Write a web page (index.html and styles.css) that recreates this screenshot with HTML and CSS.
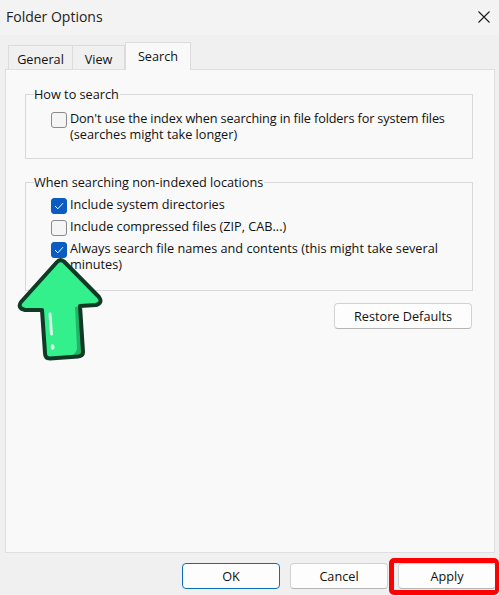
FILE: index.html
```html
<!DOCTYPE html>
<html lang="en">
<head>
<meta charset="utf-8">
<title>Folder Options</title>
<link rel="stylesheet" href="styles.css">
</head>
<body>
<div class="dialog">
  <header class="titlebar">
    <span class="title">Folder Options</span>
    <svg class="close" width="14" height="14" viewBox="0 0 14 14"><path d="M1.500 1.500 L12.500 12.500 M12.500 1.500 L1.500 12.500" stroke="#1a1a1a" stroke-width="1.100" fill="none"/></svg>
  </header>
  <div class="tabs">
    <div class="tab tab-general">General</div>
    <div class="tab tab-view">View</div>
    <div class="tab tab-active">Search</div>
  </div>
  <main class="panel">
    <section class="group group-how">
      <div class="legend">How to search</div>
      <label class="option">
        <span class="box"></span>
        <span class="label"><span class="tight">Don't use the index when searching in file folders for system files</span><br>(searches might take longer)</span>
      </label>
    </section>
    <section class="group group-when">
      <div class="legend">When searching non-indexed locations</div>
      <label class="option">
        <span class="box checked"><svg width="10" height="8" viewBox="0 0 10 8"><path d="M1 4 L3.800 6.800 L9 1.200" stroke="#fff" stroke-width="1" fill="none"/></svg></span>
        <span class="label">Include system directories</span>
      </label>
      <label class="option">
        <span class="box"></span>
        <span class="label">Include compressed files (ZIP, CAB...)</span>
      </label>
      <label class="option">
        <span class="box checked"><svg width="10" height="8" viewBox="0 0 10 8"><path d="M1 4 L3.800 6.800 L9 1.200" stroke="#fff" stroke-width="1" fill="none"/></svg></span>
        <span class="label">Always search file names and contents (this might take several<br>minutes)</span>
      </label>
    </section>
    <div class="restore-row"><button class="btn btn-restore">Restore Defaults</button></div>
  </main>
  <footer class="actions">
    <button class="btn btn-primary">OK</button>
    <button class="btn">Cancel</button>
    <button class="btn">Apply</button>
  </footer>
</div>
<div class="highlight"></div>
<svg class="arrow" width="90" height="110" viewBox="0 0 90 110">
  <path d="M40 6 Q43 2.500 47 5.500 L82 41 Q86 47 79 49 L63 50 L66 96 Q66 100 61 100.500 L33 102.500 Q28 102.500 28 97 L25 54 L8 54 Q0 52 4 46 Z" fill="#34f08c"/>
  <path d="M58 51 L63 50 L66 96 Q66 100 61 100.500 L49 101.500 Q60 99 60 92 Z" fill="#23b566"/>
  <path d="M40 6 Q43 2.500 47 5.500 L82 41 Q86 47 79 49 L63 50 L66 96 Q66 100 61 100.500 L33 102.500 Q28 102.500 28 97 L25 54 L8 54 Q0 52 4 46 Z" fill="none" stroke="#0f3a26" stroke-width="4" stroke-linejoin="round"/>
  <path d="M33 58 L34.500 78" stroke="#d8fbe8" stroke-width="3" stroke-linecap="round" fill="none"/>
  <path d="M35.500 90 L35.700 92" stroke="#d8fbe8" stroke-width="3.500" stroke-linecap="round" fill="none"/>
</svg>
</body>
</html>
```

FILE: styles.css
```css
* { box-sizing: border-box; }
html, body { margin: 0; padding: 0; }
body {
  width: 499px;
  height: 595px;
  overflow: hidden;
  position: relative;
  background: #f0f0f0;
  font-family: "Open Sans", "Noto Sans", sans-serif;
  font-size: 12.7px;
  color: #111;
}
.dialog { display: flex; flex-direction: column; height: 595px; }
.titlebar {
  height: 35px;
  flex: none;
  background: #f3f3f3;
  display: flex;
  align-items: center;
  justify-content: space-between;
  padding: 0 8px 2px 6px;
}
.title { font-size: 14px; color: #222; }
.tabs {
  height: 34px;
  flex: none;
  display: flex;
  align-items: flex-end;
  padding-left: 8px;
  position: relative;
  z-index: 1;
}
.tab {
  height: 24px;
  background: #f0f0f0;
  border: 1px solid #dcdcdc;
  border-bottom: none;
  display: flex;
  align-items: center;
  justify-content: center;
  padding-top: 3px;
}
.tab-general { width: 65px; }
.tab-view { width: 52px; border-left: none; }
.tab-active {
  width: 66px;
  height: 28px;
  margin-bottom: -1px;
  background: #f9f9f9;
  padding-top: 0;
  padding-bottom: 1px;
}
.panel {
  flex: none;
  width: 490px;
  height: 484px;
  margin-left: 5px;
  background: #f9f9f9;
  border: 1px solid #dfdfdf;
  padding: 24px 21px 0 19px;
}
.group {
  border: 1px solid #d9d9d9;
  position: relative;
  margin-bottom: 23px;
}
.group-how { height: 65px; padding: 15px 0 0 25px; }
.group-when { height: 109px; padding: 13px 0 0 25px; }
.legend {
  position: absolute;
  left: 8px;
  top: -9px;
  line-height: 16px;
  padding: 0 1px 0 0;
  background: #f9f9f9;
  white-space: nowrap;
}
.option { display: flex; align-items: flex-start; margin-bottom: 4px; }
.box {
  width: 16px;
  height: 16px;
  flex: none;
  margin-top: 2px;
  margin-right: 3px;
  border: 1px solid #8a8a8a;
  border-radius: 3px;
  background: #f5f5f5;
  display: flex;
  align-items: center;
  justify-content: center;
}
.box.checked { background: #0b5cc0; border-color: #0b5cc0; }
.label { line-height: 16px; white-space: nowrap; }
.tight { letter-spacing: -0.13px; }
.restore-row { display: flex; justify-content: flex-end; margin-top: -11px; padding-right: 1px; }
.btn {
  width: 98px;
  height: 26px;
  padding: 0;
  background: #fdfdfd;
  border: 1px solid #d2d2d2;
  border-bottom-color: #b5b5b5;
  border-radius: 4px;
  font: inherit;
  color: #111;
}
.btn-restore { width: 138px; }
.btn-primary { border: 1px solid #0b6cbd; }
.actions {
  flex: 1;
  display: flex;
  justify-content: flex-end;
  gap: 10px;
  padding: 10px 3px 0 0;
}
.highlight {
  position: absolute;
  left: 389px;
  top: 558px;
  width: 110px;
  height: 37px;
  border: 5px solid #f00;
  border-right-width: 4px;
  border-radius: 5px;
}
.arrow { position: absolute; left: 17px; top: 256px; }
```
